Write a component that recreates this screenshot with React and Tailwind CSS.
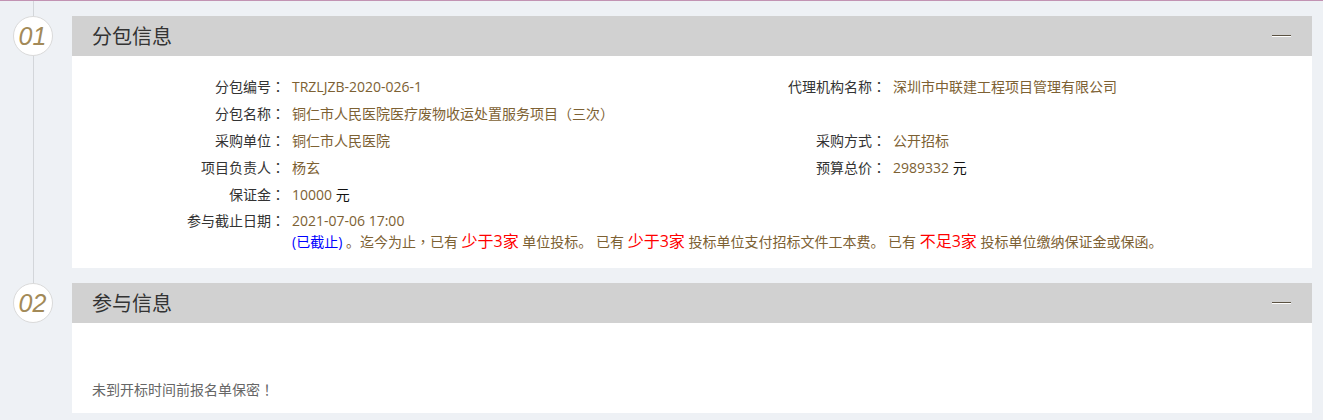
import React from 'react';

const font = "font-['Open_Sans','Noto_Sans_CJK_SC',sans-serif]";
const tc = "font-['Noto_Sans_CJK_TC',sans-serif]";

function Step({ num, line }) {
    return (
        <div className="w-[72px] shrink-0 flex flex-col items-start pl-[13px]">
            {line && <div className="ml-[20px] w-px h-[15px] bg-[#d3d6da]" />}
            <div className="w-[40px] h-[40px] rounded-full border border-[#dadada] bg-white flex items-center justify-center">
                <span className="font-['Liberation_Sans',sans-serif] italic text-[25px] leading-none text-[#a38a58] pr-[1px]">
                    {num}
                </span>
            </div>
            {line && <div className="ml-[20px] w-px flex-1 bg-[#d3d6da]" />}
        </div>
    );
}

function PanelHeader({ title }) {
    return (
        <div className="h-[40px] bg-[#d1d1d1] flex items-center justify-between pl-[20px] pr-[21px]">
            <h2 className="text-[20px] text-[#333] font-normal leading-none pt-[2px]">{title}</h2>
            <span className="block w-[19px] h-px bg-[#5b5242] shadow-[0_1px_0_#ffffff] -mt-[2px]" />
        </div>
    );
}

function Label({ children }) {
    return (
        <div className="text-right text-[#333]">
            {children}
            <span className={tc}>：</span>
        </div>
    );
}

function Value({ children, className = '' }) {
    return <div className={`pl-[7px] text-[#7d6133] ${className}`}>{children}</div>;
}

const Red = ({ children }) => <span className="text-[#ff0000] text-[16px]">{children}</span>;

function App() {
    return (
        <div className={`min-h-[420px] bg-[#eef1f5] border-t border-[#c293b3] ${font}`}>
            {/* 分包信息 */}
            <div className="flex">
                <Step num="01" line />
                <div className="w-[1240px] mt-[15px] mb-[15px]">
                    <PanelHeader title="分包信息" />
                    <div className="bg-white pt-[17px] pb-[16px] text-[14px]">
                        <div className="grid grid-cols-[213px_388px_213px_1fr] auto-rows-[27px] items-center">
                            <Label>分包编号</Label>
                            <Value>TRZLJZB-2020-026-1</Value>
                            <Label>代理机构名称</Label>
                            <Value>深圳市中联建工程项目管理有限公司</Value>

                            <Label>分包名称</Label>
                            <Value className="col-span-3">铜仁市人民医院医疗废物收运处置服务项目<span className={tc}>（</span>三次<span className={tc}>）</span></Value>

                            <Label>采购单位</Label>
                            <Value>铜仁市人民医院</Value>
                            <Label>采购方式</Label>
                            <Value>公开招标</Value>

                            <Label>项目负责人</Label>
                            <Value>杨玄</Value>
                            <Label>预算总价</Label>
                            <Value>2989332 <span className="text-[#111]">元</span></Value>

                            <Label>保证金</Label>
                            <Value className="col-span-3">10000 <span className="text-[#111]">元</span></Value>
                        </div>
                        <div className="grid grid-cols-[213px_1fr] leading-[21px] mt-[2px]">
                            <Label>参与截止日期</Label>
                            <Value>
                                <div>2021-07-06 17:00</div>
                                <div className="whitespace-nowrap">
                                    <span className="text-[#0000ff]">(已截止)</span> 。迄今为止<span className={tc}>，</span>已有 <Red>少于3家</Red> 单位投标。 已有 <Red>少于3家</Red> 投标单位支付招标文件工本费。 已有 <Red>不足3家</Red> 投标单位缴纳保证金或保函。
                                </div>
                            </Value>
                        </div>
                    </div>
                </div>
            </div>

            {/* 参与信息 */}
            <div className="flex">
                <Step num="02" />
                <div className="w-[1240px]">
                    <PanelHeader title="参与信息" />
                    <div className="bg-white pt-[56px] pb-[13px] pl-[20px] text-[14px] leading-[21px] text-[#666]">
                        未到开标时间前报名单保密<span className={tc}>！</span>
                    </div>
                </div>
            </div>
        </div>
    );
}

export default App;
